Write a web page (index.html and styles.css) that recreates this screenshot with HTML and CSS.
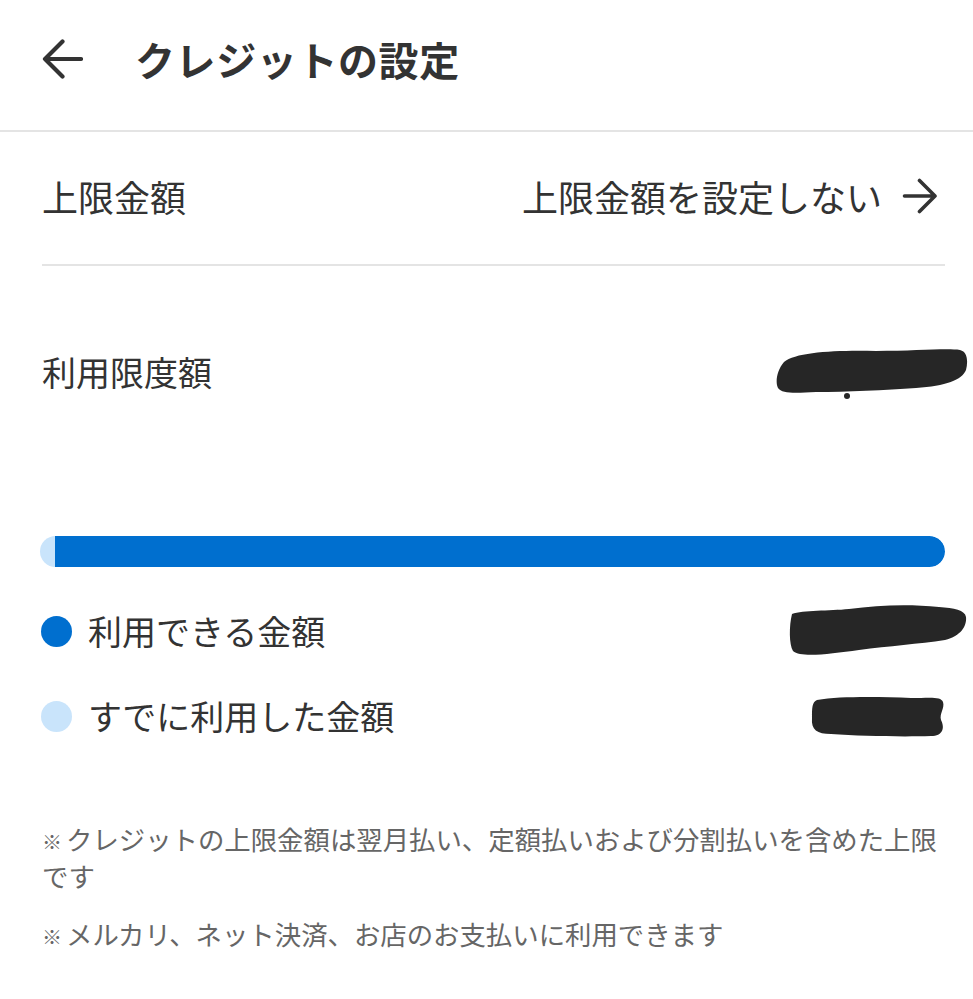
FILE: index.html
```html
<!DOCTYPE html>
<html lang="ja">
<head>
<meta charset="utf-8">
<title>クレジットの設定</title>
<link rel="stylesheet" href="styles.css">
</head>
<body>
<header class="app-header">
  <svg class="back-icon" width="42" height="42" viewBox="0 0 42 42" aria-hidden="true">
    <path d="M40 21H4M21.5 3.5L4 21l17.5 17.5" fill="none" stroke="#333" stroke-width="4.2" stroke-linecap="round" stroke-linejoin="round"/>
  </svg>
  <h1 class="title">クレジットの設定</h1>
</header>

<main class="content">
  <div class="setting-row">
    <span class="setting-label">上限金額</span>
    <span class="setting-link">上限金額を設定しない
      <svg class="next-icon" width="36" height="36" viewBox="0 0 36 36" aria-hidden="true">
        <path d="M2.5 18h30M17.5 2.5L33 18 17.5 33.5" fill="none" stroke="#333" stroke-width="3.6" stroke-linecap="round" stroke-linejoin="round"/>
      </svg>
    </span>
  </div>

  <div class="limit-row">
    <span class="limit-label">利用限度額</span>
    <svg class="redact redact-1" width="192" height="52" viewBox="0 0 192 52" aria-hidden="true">
      <path d="M8 14 C20 4 60 2 100 3 C140 3 170 0 184 2 C192 4 192 14 190 22 C186 32 170 38 140 40 C110 42 70 44 40 44 C20 45 6 46 2 40 C-1 34 1 22 8 14 Z" fill="#262626"/>
      <circle cx="71" cy="48" r="3" fill="#262626"/>
    </svg>
  </div>

  <div class="usage-bar">
    <div class="usage-fill" style="width:98.34%"></div>
  </div>

  <ul class="legend">
    <li class="legend-item">
      <span class="dot dot-available"></span>
      <span class="legend-label">利用できる金額</span>
      <svg class="redact redact-2" width="178" height="54" viewBox="0 0 178 54" aria-hidden="true">
        <path d="M3 10 C14 6 40 7 60 5 C90 1 120 0 150 3 C165 4 176 6 177 13 C178 22 172 32 156 36 C130 40 100 42 70 46 C40 50 12 54 4 47 C0 40 0 22 3 10 Z" fill="#262626"/>
      </svg>
    </li>
    <li class="legend-item">
      <span class="dot dot-used"></span>
      <span class="legend-label">すでに利用した金額</span>
      <svg class="redact redact-3" width="134" height="44" viewBox="0 0 134 44" aria-hidden="true">
        <path d="M6 6 C30 2 70 3 100 4 C118 4 130 2 132 8 C134 14 128 20 130 26 C134 34 132 42 120 42 C90 43 50 42 20 40 C6 40 0 36 1 24 C1 14 1 8 6 6 Z" fill="#262626"/>
      </svg>
    </li>
  </ul>

  <div class="notes">
    <p class="note"><span class="mark">※</span>クレジットの上限金額は翌月払い、定額払いおよび分割払いを含めた上限です</p>
    <p class="note"><span class="mark">※</span>メルカリ、ネット決済、お店のお支払いに利用できます</p>
  </div>
</main>
</body>
</html>
```

FILE: styles.css
```css
* {
  box-sizing: border-box;
}

html, body {
  margin: 0;
  padding: 0;
  background: #ffffff;
}

body {
  font-family: "Noto Sans CJK JP", "Noto Sans", sans-serif;
  color: #333333;
  width: 973px;
  overflow: hidden;
}

.app-header {
  height: 132px;
  display: flex;
  align-items: center;
  padding-left: 41px;
  padding-bottom: 12px;
  border-bottom: 2px solid #e4e4e4;
}

.back-icon {
  display: block;
  margin-right: 52px;
  flex: none;
}

.title {
  margin: 0;
  font-size: 40px;
  font-weight: 700;
  line-height: 1;
  color: #333333;
  letter-spacing: 0.6px;
}

.content {
  padding: 0 28px 0 42px;
}

.setting-row {
  height: 134px;
  display: flex;
  align-items: center;
  justify-content: space-between;
  border-bottom: 2px solid #e4e4e4;
  padding-bottom: 4px;
}

.setting-label,
.setting-link {
  font-size: 36px;
  line-height: 1;
  color: #333333;
}

.setting-link {
  display: flex;
  align-items: center;
  gap: 20px;
  padding-right: 7px;
}

.next-icon {
  display: block;
  flex: none;
}

.limit-row {
  margin-top: 82px;
  height: 52px;
  display: flex;
  align-items: flex-start;
  justify-content: space-between;
}

.limit-label {
  font-size: 34px;
  line-height: 48px;
}

.redact {
  display: block;
  flex: none;
}

.redact-1 {
  margin-right: -23px;
}

.usage-bar {
  margin-top: 136px;
  margin-left: -2px;
  height: 31px;
  border-radius: 16px;
  background: #c9e4fb;
  display: flex;
  justify-content: flex-end;
  overflow: hidden;
}

.usage-fill {
  height: 100%;
  background: #006fcf;
  border-radius: 0 16px 16px 0;
}

.legend {
  list-style: none;
  margin: 38px 0 0;
  padding: 0;
  display: flex;
  flex-direction: column;
  gap: 33px;
}

.legend-item {
  height: 52px;
  display: flex;
  align-items: center;
}

.dot {
  width: 31px;
  height: 31px;
  border-radius: 50%;
  margin-left: -1px;
  margin-right: 16px;
  flex: none;
}

.dot-available {
  background: #006fcf;
}

.dot-used {
  background: #c9e4fb;
}

.legend-label {
  font-size: 34px;
  line-height: 1;
  flex: 1;
}

.redact-2 {
  margin-right: -22px;
}

.redact-3 {
  margin-right: 0;
}

.notes {
  margin-top: 78px;
}

.note {
  margin: 0 0 21px;
  font-size: 26.4px;
  line-height: 37px;
  color: #666666;
}

.mark {
  display: inline-block;
  width: 21px;
  font-size: 20px;
  line-height: 20px;
  margin-right: 3px;
}
```
